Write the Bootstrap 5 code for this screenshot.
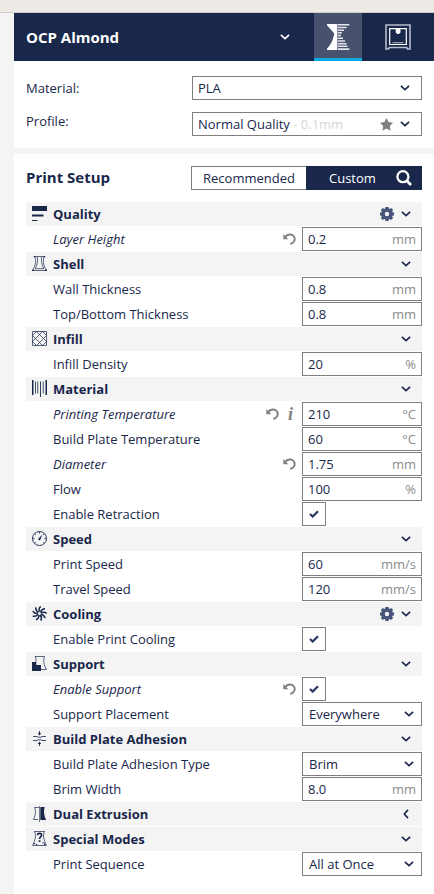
<!DOCTYPE html>
<html lang="en">
<head>
<meta charset="utf-8">
<meta name="viewport" content="width=device-width, initial-scale=1">
<title>Print Setup</title>
<link href="https://cdn.jsdelivr.net/npm/bootstrap@5.3.0/dist/css/bootstrap.min.css" rel="stylesheet">
<style>
:root{--navy:#19274b;--line:#7f7f7f;--soft:#f4f4f4}
body{font-family:"Open Sans","Noto Sans",sans-serif;font-size:13px;line-height:24px;color:var(--navy);background:var(--soft);width:434px;height:894px;overflow:hidden}
svg{display:block;flex:none}
.topstrip{height:13px;background:#eeebe6;border-bottom:1px solid #d0cdc9}
.sidebar-panel{margin-left:14px}
.machine{height:48px;background:var(--navy);color:#fff}
.machine-name{font-size:15px;font-weight:700;padding-left:12px;padding-right:24px}
.stage{width:48px;height:48px}
.stage.current{background:#48526f;border-bottom:3px solid #0ca9e3;padding-top:3px}
.stage-last{width:72px}
.choices{height:87px;padding:15px 12px 0;margin-bottom:6px}
.choices .pair{height:36px}
.choices .choice-label{width:166px}
.choices .profile-label{margin-top:-3px}
.field{height:24px;border:1px solid var(--line);background:#fff;line-height:22px}
.choices .field{width:230px;padding:0 11px 0 5px}
.faded{color:#d6d6d6}
.star,.gear{margin-right:7px}
.setup{height:740px;padding:12px 12px 0}
.setup-title{font-size:15px;font-weight:700;width:165px;line-height:23px}
.mode{height:24px;line-height:24px}
.mode-a{width:115px;border:1px solid var(--line);border-right:0;line-height:22px}
.mode-b{width:116px;background:var(--navy);color:#fff;padding:0 10px 0 23px}
.settings{gap:1px;margin-top:12px}
.section-head{height:24px;background:var(--soft);font-weight:700;padding:0 11px 0 6px}
.section-head .pic{margin-right:6px;margin-top:-1px}
.closed{margin-right:2px}
.setting{height:24px;padding-left:27px}
.setting .field{width:120px;padding:0 5px}
.setting .pick{padding:0 7px 0 6px}
.setting .tick{width:24px;padding:0 0 0 6px}
.tick svg{margin-top:-1px}
.changed{font-style:italic}
.unit{color:#8c8c8c}
.marks{gap:8px;margin-right:6px}
.info-space{margin-right:8px}
.info-mark{font:italic 700 18px/20px "Liberation Serif",serif;color:#808080;width:7px;text-align:center}
</style>
<script src="https://cdn.jsdelivr.net/npm/bootstrap@5.3.0/dist/js/bootstrap.bundle.min.js"></script>
</head>
<body>
<svg width="0" height="0" class="position-absolute" aria-hidden="true">
<symbol id="down" viewBox="0 0 10 6"><path d="M.9.8 5 4.700 9.100.8" fill="none" stroke="currentColor" stroke-width="1.600"/></symbol>
<symbol id="left" viewBox="0 0 6 10"><path d="M5 .9 1.300 5 5 9.100" fill="none" stroke="currentColor" stroke-width="1.600"/></symbol>
<symbol id="gear" viewBox="0 0 14 14"><path fill="#48557a" fill-rule="evenodd" d="M5.400 0h3.200l.3 1.700.7.300 1.600-.9 1.900 1.900-.9 1.600.3.700 1.500.3v2.800l-1.500.3-.3.7.9 1.600-1.900 1.900-1.600-.9-.7.3-.3 1.700H5.400l-.3-1.700-.7-.3-1.600.9L.9 11l.9-1.600-.3-.7L0 8.400V5.600l1.500-.3.300-.7L.9 3l1.900-1.900 1.600.9.7-.3zM7 4.800a2.200 2.200 0 1 0 0 4.400 2.200 2.200 0 0 0 0-4.400z"/></symbol>
<symbol id="undo" viewBox="0 0 13 12"><path d="M2 4C4.500 1 8.800.6 10.800 3.300c2.200 3.200 0 7.200-3.600 7.500" fill="none" stroke="#808080" stroke-width="1.900"/><path d="M.3 1v5.200h5z" fill="#808080"/></symbol>
<symbol id="tickmark" viewBox="0 0 10 8"><path d="M1 4 3.700 6.500 9 1.200" fill="none" stroke="#2c3960" stroke-width="2.300"/></symbol>
<symbol id="i-quality" viewBox="0 0 15 15"><path fill="#19274b" d="M0 0h15v5H0zM0 8.500h11.500v2H0zM0 14h5.500v1H0z"/></symbol>
<symbol id="i-shell" viewBox="0 0 15 15"><path d="M2.500.5h10M12.300.6c-1.800 4.400-1 8 2 13.900H.7C3.700 8.600 4.500 5 2.700.6" fill="none" stroke="#19274b" stroke-width=".7"/><path d="M5.300 1c.7 4 .1 7-2 11.500M9.700 1c-.7 4-.1 7 2 11.500M3 12.700h9" fill="none" stroke="#19274b" stroke-width=".7"/><path fill="#19274b" d="M1.800 0h1.400v1.200H1.800zM11.800 0h1.400v1.200h-1.400zM0 13.600h1.600V15H0zM13.400 13.600H15V15h-1.600z"/></symbol>
<symbol id="i-infill" viewBox="0 0 15 15"><path d="M.5.5h14v14H.5zM4.500.5l10 10M10.500.5l-10 10M.5 4.500l10 10M14.500 4.500l-10 10M.5 4.500l4-4M10.500.5l4 4M.5 10.500l4 4M10.500 14.500l4-4" fill="none" stroke="#19274b" stroke-width=".7"/></symbol>
<symbol id="i-material" viewBox="0 0 15 17"><path fill="#19274b" d="M0 0h1.500v15H0zM13.500 0H15v15h-1.500zM3.100 1.500h.8v12h-.8zM5.400 1.500h.8v12h-.8zM8 1.500h.9V17H8zM10.800 1.500h.8v12h-.8z"/></symbol>
<symbol id="i-speed" viewBox="0 0 15 15"><circle cx="7.500" cy="7.500" r="7" fill="none" stroke="#19274b" stroke-width=".9"/><path d="M7.500.5v2M2.600 2.600l1.200 1.200M12.400 2.600l-1.200 1.200M.5 7.500h2M14.500 7.500h-2M2.600 12.400l1.100-1.100M12.400 12.400l-1.100-1.100" stroke="#19274b" stroke-width=".8"/><path d="M10.400 3.400 8.500 8.300a1.100 1.100 0 1 1-1.700-1.100z" fill="#19274b"/></symbol>
<symbol id="i-fan" viewBox="0 0 15 15"><g fill="none" stroke="#19274b" stroke-width="1.500"><path id="blade" d="M7.300 5.800C6.700 3.600 7.200 1.700 8.700.4"/><use href="#blade" transform="rotate(40 7.500 7.500)"/><use href="#blade" transform="rotate(80 7.500 7.500)"/><use href="#blade" transform="rotate(120 7.500 7.500)"/><use href="#blade" transform="rotate(160 7.500 7.500)"/><use href="#blade" transform="rotate(200 7.500 7.500)"/><use href="#blade" transform="rotate(240 7.500 7.500)"/><use href="#blade" transform="rotate(280 7.500 7.500)"/><use href="#blade" transform="rotate(320 7.500 7.500)"/></g><circle cx="7.500" cy="7.500" r="1.900" fill="none" stroke="#19274b" stroke-width=".5"/></symbol>
<symbol id="i-support" viewBox="0 0 15 15"><path d="M3 .5h9.500c-1.500 4.500-.8 8 2 13H9M3.200.5c.8 2 1 3.700.7 5.500" fill="none" stroke="#19274b" stroke-width=".7"/><path fill="#19274b" d="M0 6h4.300v3H9v6H0z"/></symbol>
<symbol id="i-adhesion" viewBox="0 0 15 15"><path d="M1 5.500h4l1 .7h3l1-.7h4M1 9.500h4l1-.7h3l1 .7h4" fill="none" stroke="#19274b" stroke-width=".8"/><path d="M7.500 0v4M7.500 11v4" stroke="#19274b" stroke-width=".9"/><path fill="#19274b" d="M5.800 2h3.400L7.500 4.600zM5.800 13h3.400L7.500 10.400z"/></symbol>
<symbol id="i-dual" viewBox="0 0 15 16"><path d="M7 1.500H2.500c1.700 4 1.200 7-1 12H6" fill="none" stroke="#19274b" stroke-width=".7"/><path d="M7.500 0v16" stroke="#19274b" stroke-width=".6"/><path fill="#19274b" d="M8.300 1h4.400c-1.300 4-.8 7.500 1.300 13H8.300z"/></symbol>
<symbol id="i-special" viewBox="0 0 15 15"><path d="M2 .5h11M12.300.6c-1.400 4-.9 7 2.100 13.900H.6C3.600 7.600 4.100 4.600 2.700.6" fill="none" stroke="#19274b" stroke-width=".7"/><path d="M5.400 4c.4-2.400 4.600-2 4.200.3C9.300 5.900 7.600 5.800 7.600 8" fill="none" stroke="#19274b" stroke-width="1.700"/><path fill="#19274b" d="M6.700 9.200h1.800V11H6.700zM1.800 12h1.400v1.200H1.800zM4 13h1.200v1H4zM10.500 11.300h1.300v1.200h-1.300zM12 12.600h1.300v1.300H12z"/></symbol>
</svg>

<div class="topstrip"></div>
<main class="sidebar-panel">
  <header class="machine d-flex align-items-center">
    <div class="machine-name d-flex flex-grow-1 align-items-center justify-content-between">OCP Almond
      <svg width="10" height="6"><use href="#down"/></svg></div>
    <div class="stage current d-flex align-items-center justify-content-center">
      <svg width="24" height="26" viewBox="0 0 24 26"><path fill="#fff" d="M1 0h10v26H1v-1.200C4.500 21 7 16.500 8.300 9.500L1 1.300z"/><path fill="#8990a5" d="M11 0h1v26h-1z"/><path fill="#e6e8ed" d="M12 0h11.300v1.500H12zM12 2.700h8.500v1.500H12zM12 5.400h6v1.500h-6zM12 8.100h3.800v1.500H12zM12 10.800h3v1.500h-3zM12 13.500h5v1.500h-5zM12 16.200h7v1.500h-7zM12 18.900h8.600v1.500H12zM12 21.600h9.500v1.500H12zM12 24.300h11.300V26H12z"/></svg></div>
    <div class="stage stage-last d-flex align-items-center justify-content-center">
      <svg width="26" height="26" viewBox="0 0 26 26"><path d="M1 1h24v24h-2.500l-.8-1.500H4.300L3.500 25H1z" fill="none" stroke="#b8bdca" stroke-width="1.600"/><path d="M4.700 4.700h16.600v15.800H4.700z" fill="none" stroke="#fff" stroke-width="1.200"/><path d="M7.500 18.700h11" stroke="#c3c7d2" stroke-width=".9"/><path fill="#fff" d="M10.700 5h4.800v3.400l-1.600 1.500h-1.600l-1.600-1.500z"/></svg></div>
  </header>

  <section class="choices bg-white">
    <div class="pair d-flex"><span class="choice-label">Material:</span>
      <div class="field d-flex align-items-center justify-content-between">PLA<svg width="10" height="6"><use href="#down"/></svg></div></div>
    <div class="pair d-flex"><span class="choice-label profile-label">Profile:</span>
      <div class="field d-flex align-items-center"><span class="flex-grow-1">Normal Quality <span class="faded">- 0.1mm</span></span>
        <svg width="13" height="13" viewBox="0 0 13 13" class="star"><path fill="#808080" d="m6.500 0 2 4.100 4.500.7-3.200 3.200.8 4.800-4.100-2.200-4.100 2.200.8-4.800L0 4.800l4.500-.7z"/></svg>
        <svg width="10" height="6"><use href="#down"/></svg></div></div>
  </section>

  <section class="setup bg-white">
    <div class="d-flex">
      <div class="setup-title">Print Setup</div>
      <div class="mode mode-a text-center">Recommended</div>
      <div class="mode mode-b d-flex align-items-center justify-content-between">Custom
        <svg width="16" height="16" viewBox="0 0 16 16"><circle cx="6.900" cy="6.700" r="5.500" fill="none" stroke="#fff" stroke-width="2.300"/><path d="m10.600 10.600 4.400 4.400" stroke="#fff" stroke-width="2.800"/></svg></div>
    </div>

    <div class="settings d-flex flex-column">
      <div class="section-head d-flex align-items-center"><svg class="pic" width="15" height="15"><use href="#i-quality"/></svg><span class="flex-grow-1">Quality</span><svg width="14" height="14" class="gear"><use href="#gear"/></svg><svg width="10" height="6"><use href="#down"/></svg></div>
      <div class="setting d-flex align-items-center"><span class="flex-grow-1 changed">Layer Height</span><span class="marks d-flex align-items-center"><svg width="13" height="12"><use href="#undo"/></svg></span><div class="field d-flex justify-content-between"><span>0.2</span><span class="unit">mm</span></div></div>

      <div class="section-head d-flex align-items-center"><svg class="pic" width="15" height="15"><use href="#i-shell"/></svg><span class="flex-grow-1">Shell</span><svg width="10" height="6"><use href="#down"/></svg></div>
      <div class="setting d-flex"><span class="flex-grow-1">Wall Thickness</span><div class="field d-flex justify-content-between"><span>0.8</span><span class="unit">mm</span></div></div>
      <div class="setting d-flex"><span class="flex-grow-1">Top/Bottom Thickness</span><div class="field d-flex justify-content-between"><span>0.8</span><span class="unit">mm</span></div></div>

      <div class="section-head d-flex align-items-center"><svg class="pic" width="15" height="15"><use href="#i-infill"/></svg><span class="flex-grow-1">Infill</span><svg width="10" height="6"><use href="#down"/></svg></div>
      <div class="setting d-flex"><span class="flex-grow-1">Infill Density</span><div class="field d-flex justify-content-between"><span>20</span><span class="unit">%</span></div></div>

      <div class="section-head d-flex align-items-center"><svg class="pic" width="15" height="17"><use href="#i-material"/></svg><span class="flex-grow-1">Material</span><svg width="10" height="6"><use href="#down"/></svg></div>
      <div class="setting d-flex align-items-center"><span class="flex-grow-1 changed">Printing Temperature</span><span class="marks info-space d-flex align-items-center"><svg width="13" height="12"><use href="#undo"/></svg><span class="info-mark">i</span></span><div class="field d-flex justify-content-between"><span>210</span><span class="unit">°C</span></div></div>
      <div class="setting d-flex"><span class="flex-grow-1">Build Plate Temperature</span><div class="field d-flex justify-content-between"><span>60</span><span class="unit">°C</span></div></div>
      <div class="setting d-flex align-items-center"><span class="flex-grow-1 changed">Diameter</span><span class="marks d-flex align-items-center"><svg width="13" height="12"><use href="#undo"/></svg></span><div class="field d-flex justify-content-between"><span>1.75</span><span class="unit">mm</span></div></div>
      <div class="setting d-flex"><span class="flex-grow-1">Flow</span><div class="field d-flex justify-content-between"><span>100</span><span class="unit">%</span></div></div>
      <div class="setting d-flex"><span class="flex-grow-1">Enable Retraction</span><div class="field tick d-flex align-items-center"><svg width="10" height="8"><use href="#tickmark"/></svg></div><span class="px-5"></span></div>

      <div class="section-head d-flex align-items-center"><svg class="pic" width="15" height="15"><use href="#i-speed"/></svg><span class="flex-grow-1">Speed</span><svg width="10" height="6"><use href="#down"/></svg></div>
      <div class="setting d-flex"><span class="flex-grow-1">Print Speed</span><div class="field d-flex justify-content-between"><span>60</span><span class="unit">mm/s</span></div></div>
      <div class="setting d-flex"><span class="flex-grow-1">Travel Speed</span><div class="field d-flex justify-content-between"><span>120</span><span class="unit">mm/s</span></div></div>

      <div class="section-head d-flex align-items-center"><svg class="pic" width="15" height="15"><use href="#i-fan"/></svg><span class="flex-grow-1">Cooling</span><svg width="14" height="14" class="gear"><use href="#gear"/></svg><svg width="10" height="6"><use href="#down"/></svg></div>
      <div class="setting d-flex"><span class="flex-grow-1">Enable Print Cooling</span><div class="field tick d-flex align-items-center"><svg width="10" height="8"><use href="#tickmark"/></svg></div><span class="px-5"></span></div>

      <div class="section-head d-flex align-items-center"><svg class="pic" width="15" height="15"><use href="#i-support"/></svg><span class="flex-grow-1">Support</span><svg width="10" height="6"><use href="#down"/></svg></div>
      <div class="setting d-flex align-items-center"><span class="flex-grow-1 changed">Enable Support</span><span class="marks d-flex align-items-center"><svg width="13" height="12"><use href="#undo"/></svg></span><div class="field tick d-flex align-items-center"><svg width="10" height="8"><use href="#tickmark"/></svg></div><span class="px-5"></span></div>
      <div class="setting d-flex"><span class="flex-grow-1">Support Placement</span><div class="field pick d-flex align-items-center justify-content-between">Everywhere<svg width="10" height="6"><use href="#down"/></svg></div></div>

      <div class="section-head d-flex align-items-center"><svg class="pic" width="15" height="15"><use href="#i-adhesion"/></svg><span class="flex-grow-1">Build Plate Adhesion</span><svg width="10" height="6"><use href="#down"/></svg></div>
      <div class="setting d-flex"><span class="flex-grow-1">Build Plate Adhesion Type</span><div class="field pick d-flex align-items-center justify-content-between">Brim<svg width="10" height="6"><use href="#down"/></svg></div></div>
      <div class="setting d-flex"><span class="flex-grow-1">Brim Width</span><div class="field d-flex justify-content-between"><span>8.0</span><span class="unit">mm</span></div></div>

      <div class="section-head d-flex align-items-center"><svg class="pic" width="15" height="16"><use href="#i-dual"/></svg><span class="flex-grow-1">Dual Extrusion</span><svg width="6" height="10" class="closed"><use href="#left"/></svg></div>
      <div class="section-head d-flex align-items-center"><svg class="pic" width="15" height="15"><use href="#i-special"/></svg><span class="flex-grow-1">Special Modes</span><svg width="10" height="6"><use href="#down"/></svg></div>
      <div class="setting d-flex"><span class="flex-grow-1">Print Sequence</span><div class="field pick d-flex align-items-center justify-content-between">All at Once<svg width="10" height="6"><use href="#down"/></svg></div></div>
    </div>
  </section>
</main>
</body>
</html>
